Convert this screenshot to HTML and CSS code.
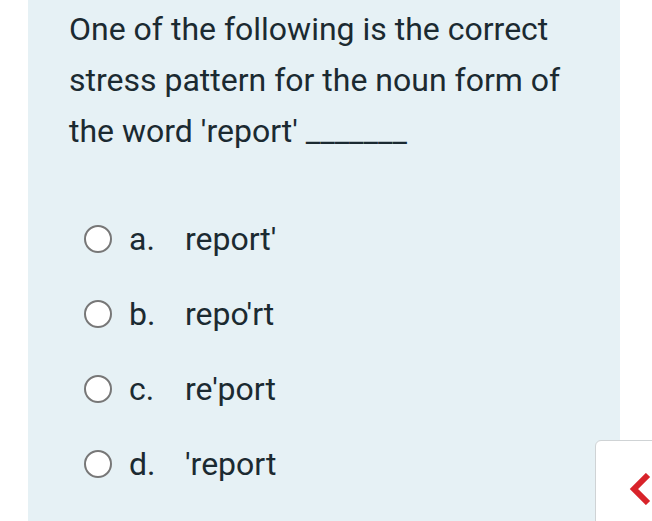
FILE: index.html
```html
<!DOCTYPE html>
<html>
<head>
<meta charset="utf-8">
<link rel="stylesheet" href="styles.css">
</head>
<body>
<div class="page">
  <div class="panel">
    <p class="question">One of the following is the correct stress pattern for the noun form of the word 'report' _______</p>
    <div class="options">
      <div class="option"><span class="radio"></span><span class="letter">a.</span><span class="answer">report'</span></div>
      <div class="option"><span class="radio"></span><span class="letter">b.</span><span class="answer">repo'rt</span></div>
      <div class="option"><span class="radio"></span><span class="letter">c.</span><span class="answer">re'port</span></div>
      <div class="option"><span class="radio"></span><span class="letter">d.</span><span class="answer">'report</span></div>
    </div>
  </div>
  <div class="nav-tab">
    <svg class="chev" width="24" height="32" viewBox="0 0 24 32"><path d="M20 2 L6 16 L20 30" fill="none" stroke="#d8232a" stroke-width="6" stroke-linejoin="miter"/></svg>
  </div>
</div>
</body>
</html>
```
FILE: styles.css
```css
html, body {
  margin: 0;
  padding: 0;
  background: #ffffff;
}
.page {
  position: relative;
  width: 652px;
  height: 521px;
  overflow: hidden;
  font-family: Roboto, "Noto Sans", sans-serif;
  color: #1b2a31;
}
.panel {
  margin-left: 28px;
  width: 592px;
  height: 521px;
  background: #e6f1f5;
  box-sizing: border-box;
  padding: 4px 0 0 41px;
}
.question {
  margin: 0;
  font-size: 32px;
  line-height: 51px;
  width: 505px;
}
.options {
  display: flex;
  flex-direction: column;
  margin-top: 68px;
  margin-left: 15px;
  gap: 47px;
}
.option {
  display: flex;
  align-items: center;
  height: 28px;
  font-size: 32px;
}
.radio {
  flex: none;
  width: 28px;
  height: 28px;
  box-sizing: border-box;
  border: 2px solid #777777;
  border-radius: 50%;
  background: #ffffff;
}
.letter {
  margin-left: 17px;
  width: 56px;
}
.nav-tab {
  position: absolute;
  left: 595px;
  top: 440px;
  width: 80px;
  height: 100px;
  background: #ffffff;
  border: 1px solid #cfd3d5;
  border-radius: 6px;
  box-sizing: border-box;
}
.chev {
  position: absolute;
  left: 32px;
  top: 32px;
}
```
